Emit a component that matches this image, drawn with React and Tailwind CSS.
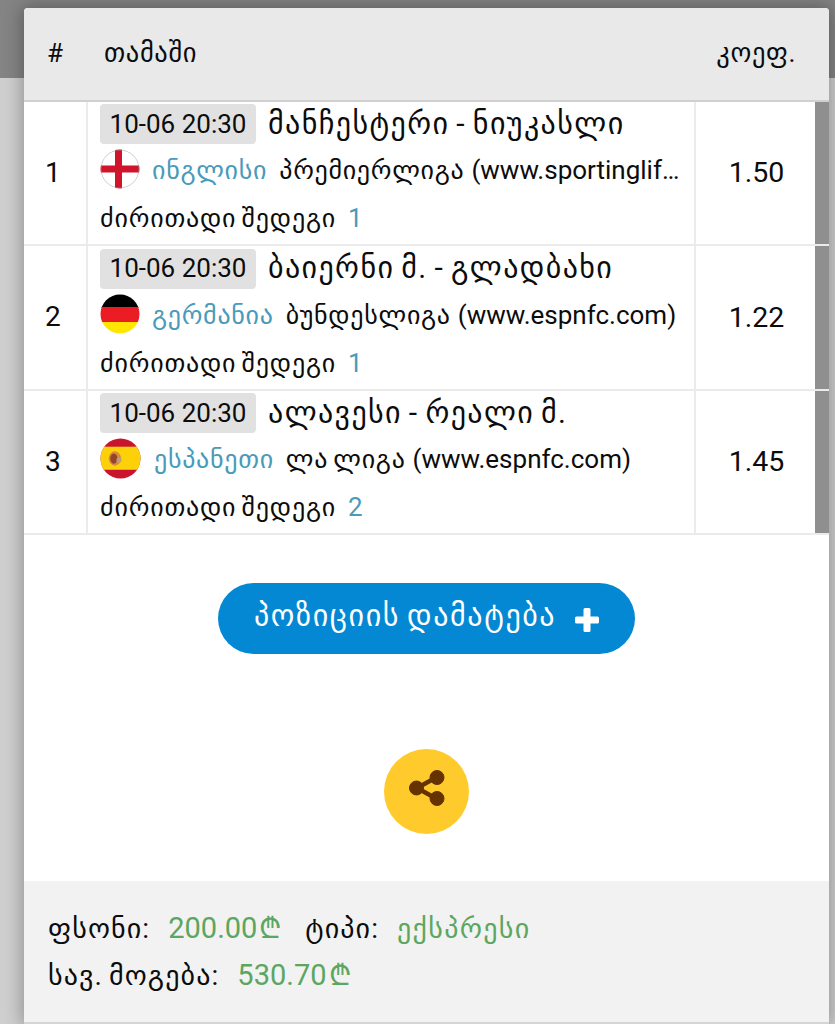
const bets = [
  {
    id: 1,
    date: "10-06 20:30",
    game: "მანჩესტერი - ნიუკასლი",
    flag: "england",
    country: "ინგლისი",
    league: "პრემიერლიგა",
    source: "(www.sportinglif…",
    market: "ძირითადი შედეგი",
    pick: "1",
    odds: "1.50",
  },
  {
    id: 2,
    date: "10-06 20:30",
    game: "ბაიერნი მ. - გლადბახი",
    flag: "germany",
    country: "გერმანია",
    league: "ბუნდესლიგა",
    source: "(www.espnfc.com)",
    market: "ძირითადი შედეგი",
    pick: "1",
    odds: "1.22",
  },
  {
    id: 3,
    date: "10-06 20:30",
    game: "ალავესი - რეალი მ.",
    flag: "spain",
    country: "ესპანეთი",
    league: "ლა ლიგა",
    source: "(www.espnfc.com)",
    market: "ძირითადი შედეგი",
    pick: "2",
    odds: "1.45",
  },
];

const Flag = ({ name }) => (
  <svg viewBox="0 0 40 40" className={name === "spain" ? "mr-px size-[41px] shrink-0" : "size-10 shrink-0"}>
    <clipPath id={`flag-${name}`}>
      <circle cx="20" cy="20" r="19.5" />
    </clipPath>
    <g clipPath={`url(#flag-${name})`}>
      {name === "england" && (
        <>
          <rect width="40" height="40" fill="#fff" />
          <rect x="15" width="7" height="40" fill="#d0142c" />
          <rect y="16.5" width="40" height="7" fill="#d0142c" />
          <circle cx="20" cy="20" r="19" fill="none" stroke="#9a9a9a" strokeOpacity="0.55" />
        </>
      )}
      {name === "germany" && (
        <>
          <rect width="40" height="14" fill="#000" />
          <rect y="13" width="40" height="15" fill="#ec1c24" />
          <rect y="28" width="40" height="12" fill="#ffe600" />
        </>
      )}
      {name === "spain" && (
        <>
          <rect width="40" height="40" fill="#c8142c" />
          <rect y="8.5" width="40" height="22.5" fill="#fcd10a" />
          <ellipse cx="14.5" cy="20" rx="6" ry="7" fill="#d98a3a" />
          <ellipse cx="13.5" cy="20" rx="3.5" ry="5" fill="#93442a" />
          <circle cx="18.5" cy="21.5" r="2.5" fill="#b9a07a" />
        </>
      )}
    </g>
  </svg>
);

const Ge = ({ className = "", children }) => (
  <span className={`whitespace-nowrap [word-spacing:-2px] ${className}`}>{children}</span>
);

const BetRow = ({ bet }) => (
  <div className="flex h-[144.33px] border-b-2 border-[#ebebeb]">
    <div className="flex w-16 shrink-0 items-center border-r-2 border-[#ebebeb] pl-[21px] text-[28px]">
      {bet.id}
    </div>
    <div className="w-[608px] shrink-0 border-r-2 border-[#ebebeb] pl-3 pt-[2.4px]">
      <div className="flex h-10 items-center">
        <span className="flex h-10 w-[156px] items-center justify-center rounded bg-[#e1e1e1] text-[26px]">
          {bet.date}
        </span>
        <Ge className="ml-3 pb-0.5 text-[30px] tracking-[1.4px]">{bet.game}</Ge>
      </div>
      <div className="mt-[5px] flex h-10 items-center text-[26px]">
        <Flag name={bet.flag} />
        <Ge className="ml-3 pt-[3px] text-[26px] tracking-[0.7px] text-[#4a9aba]">{bet.country}</Ge>
        <Ge className="ml-3 pt-[3px] text-[26px] tracking-[0.7px]">{bet.league}</Ge>
        <span className="ml-[7px] pt-[3px]">{bet.source}</span>
      </div>
      <div className="mt-[5px] flex h-12 items-center pt-px">
        <Ge className="text-[26px] tracking-[0.8px]">{bet.market}</Ge>
        <span className="ml-3 text-[26px] text-[#4a9aba]">{bet.pick}</span>
      </div>
    </div>
    <div className="flex flex-1 items-center justify-center pl-0.5 pt-px text-[28.5px]">{bet.odds}</div>
    <div className="w-3.5 bg-[#8f8f8f]" />
  </div>
);

const Amount = ({ children }) => (
  <span className="ml-[18px] w-[114px] whitespace-nowrap text-[29px] text-[#5ca660]">
    {children}
    <span className="ml-0.5">₾</span>
  </span>
);

export default function App() {
  return (
    <div className="h-screen overflow-hidden bg-linear-to-b from-[#848484] from-[78px] to-[#cfcfcf] to-[78px] pl-6 pr-1.5 pt-2 font-['Roboto','DejaVu_Sans',sans-serif] text-[#0c0c0c]">
      <div className="flex h-full flex-col overflow-hidden rounded-t bg-white shadow-[0_0_18px_2px_rgba(0,0,0,0.3)]">
        <div className="flex h-[94px] shrink-0 items-center border-b-2 border-[#d0d0d0] bg-[#e9e9e9] pb-0.5">
          <span className="w-20 pl-[23px] text-[26px]">#</span>
          <Ge className="flex-1 text-[26.5px] tracking-[0.6px]">თამაში</Ge>
          <Ge className="pr-[33px] text-[26.5px] tracking-[0.6px]">კოეფ.</Ge>
        </div>
        {bets.map((bet) => (
          <BetRow key={bet.id} bet={bet} />
        ))}
        <div className="flex flex-1 flex-col items-center pt-12">
          <button className="flex h-[71px] w-[417px] items-center rounded-full bg-[#0488d3] pl-9 text-white">
            <Ge className="w-[301px] pb-1.5 text-[30px] tracking-[1.6px]">პოზიციის დამატება</Ge>
            <svg viewBox="0 0 24 24" className="ml-5 mt-1 size-6" fill="#fff">
              <rect x="8.5" width="7" height="24" rx="1.5" />
              <rect y="8.5" width="24" height="7" rx="1.5" />
            </svg>
          </button>
          <button className="mt-[95px] flex size-[85px] items-center justify-center rounded-full bg-[#ffca2c] pb-1.5">
            <svg viewBox="0 0 36 36" className="size-9" fill="#663300" stroke="#663300">
              <path d="M28 7 8 18l20 11" fill="none" strokeWidth="4.5" />
              <circle cx="28" cy="7.5" r="7" />
              <circle cx="7.5" cy="18" r="7" />
              <circle cx="28" cy="28.5" r="7" />
            </svg>
          </button>
        </div>
        <div className="h-[143px] shrink-0 border-b-2 border-[#d5d5d5] bg-[#f2f2f2] pl-6 pt-6">
          <div className="flex h-[47px] items-center">
            <Ge className="text-[28px] tracking-[1.1px]">ფსონი:</Ge>
            <Amount>200.00</Amount>
            <Ge className="ml-[23px] text-[28px] tracking-[1.1px]">ტიპი:</Ge>
            <Ge className="ml-[18px] text-[28px] tracking-[1.3px] text-[#5ca660]">ექსპრესი</Ge>
          </div>
          <div className="flex h-[47px] items-center">
            <Ge className="text-[28px] tracking-[1.1px]">სავ. მოგება:</Ge>
            <Amount>530.70</Amount>
          </div>
        </div>
      </div>
    </div>
  );
}
